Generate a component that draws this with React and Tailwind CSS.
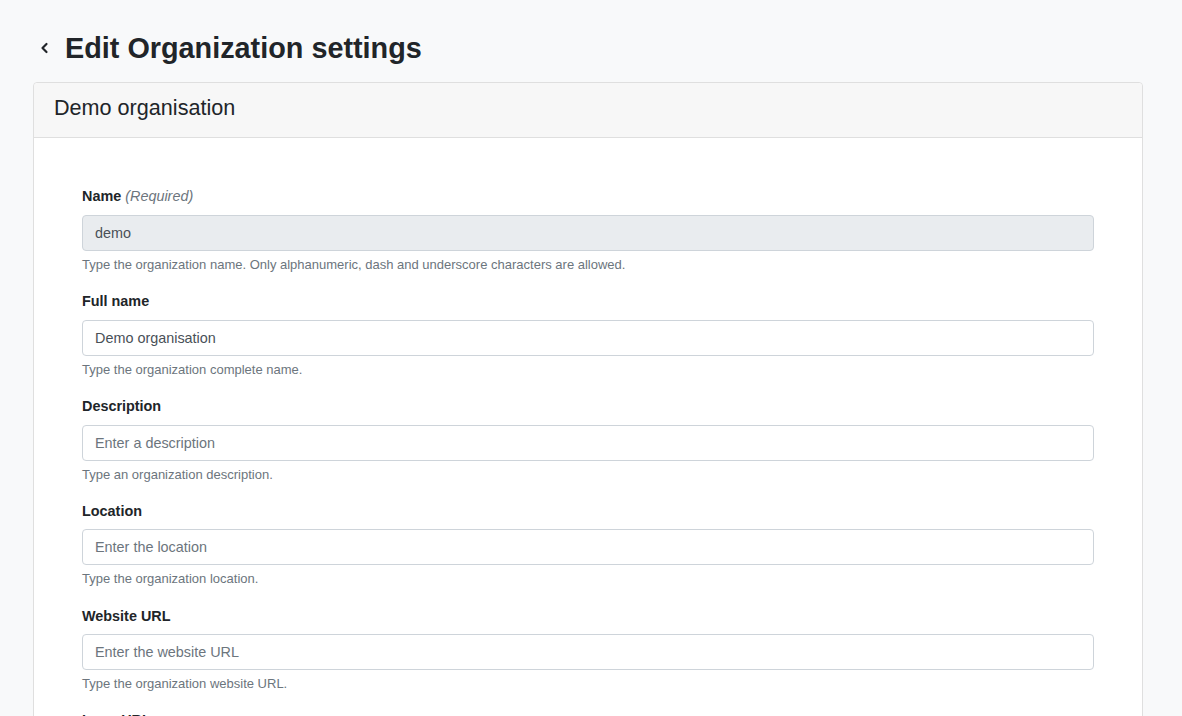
import React from "react";

const fields = [
  { label: "Name", required: true, value: "demo", disabled: true, help: "Type the organization name. Only alphanumeric, dash and underscore characters are allowed." },
  { label: "Full name", value: "Demo organisation", help: "Type the organization complete name." },
  { label: "Description", placeholder: "Enter a description", help: "Type an organization description." },
  { label: "Location", placeholder: "Enter the location", help: "Type the organization location." },
  { label: "Website URL", placeholder: "Enter the website URL", help: "Type the organization website URL." },
  { label: "Logo URL", placeholder: "Enter the logo URL", help: "Type the organization logo URL." },
];

const Field = ({ label, required, value, placeholder, disabled, help }) => {
  return (
    <div className="mb-[16.6px]">
      <label className="block text-[14.4px] leading-[21.6px] font-bold text-[#212529] mb-[7.2px]">
        {label}
        {required && <span className="font-normal italic text-[#6c757d]"> (Required)</span>}
      </label>
      <input
        className={
          "block w-full h-9 px-3 text-[14.4px] text-[#495057] border border-[#ced4da] rounded-[4px] outline-none placeholder:text-[#6c757d] " +
          (disabled ? "bg-[#e9ecef]" : "bg-white")
        }
        defaultValue={value}
        placeholder={placeholder}
        disabled={disabled}
      />
      <div className="mt-1 text-[13px] leading-[19.5px] text-[#6c757d]">{help}</div>
    </div>
  );
};

const App = () => {
  return (
    <div className="min-h-screen bg-[#f8f9fa] font-['Liberation_Sans',Arial,sans-serif] pl-[33px] pr-[39px] pt-[31px] pb-10">
      <div className="flex items-center h-[34px] mb-[17px]">
        <button className="w-[32px] h-[34px] flex items-center justify-start pl-[7px] text-[#212529]">
          <svg width="10" height="12" viewBox="0 0 10 12" fill="none">
            <polyline points="6.5,2 2.5,6 6.5,10" stroke="#212529" strokeWidth="2.2" strokeLinecap="round" strokeLinejoin="round" />
          </svg>
        </button>
        <h1 className="text-[28.8px] leading-[34px] font-bold text-[#212529]">Edit Organization settings</h1>
      </div>
      <div className="border border-[#dfdfdf] rounded-[4px] bg-white">
        <div className="h-[55px] flex items-center px-5 pb-[4px] bg-[#f7f7f7] border-b border-[#dfdfdf] rounded-t-[4px]">
          <div className="text-[21.6px] text-[#212529]">Demo organisation</div>
        </div>
        <div className="px-12 pt-12 pb-8">
          {fields.map((f) => (
            <Field key={f.label} {...f} />
          ))}
        </div>
      </div>
    </div>
  );
};

export default App;
